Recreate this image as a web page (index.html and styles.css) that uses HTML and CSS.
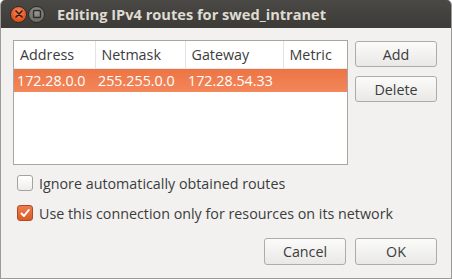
FILE: index.html
```html
<!DOCTYPE html>
<html lang="en">
<head>
    <meta charset="UTF-8">
    <title>Editing IPv4 routes for swed_intranet</title>
    <link rel="stylesheet" href="styles.css">
</head>
<body>

<div class="window">
    <div class="titlebar">
        <span class="wbtn close">
            <svg width="10" height="10" viewBox="0 0 10 10"><path d="M2 2 L8 8 M8 2 L2 8" stroke="#3a1a0e" stroke-width="1.6" stroke-linecap="round"/></svg>
        </span>
        <span class="wbtn max">
            <svg width="10" height="10" viewBox="0 0 10 10"><rect x="1.5" y="1.5" width="7" height="7" rx="1" fill="none" stroke="#2e2d2a" stroke-width="1.4"/></svg>
        </span>
        <span class="title">Editing IPv4 routes for swed_intranet</span>
    </div>

    <div class="content">
        <div class="top-row">
            <div class="routes">
                <table>
                    <tr class="head">
                        <th class="c-addr">Address</th>
                        <th class="c-mask">Netmask</th>
                        <th class="c-gw">Gateway</th>
                        <th class="c-metric">Metric</th>
                    </tr>
                    <tr class="selected">
                        <td>172.28.0.0</td>
                        <td>255.255.0.0</td>
                        <td>172.28.54.33</td>
                        <td></td>
                    </tr>
                </table>
            </div>
            <div class="side-buttons">
                <button>Add</button>
                <button>Delete</button>
            </div>
        </div>

        <div class="checks">
            <label class="check"><span class="box"></span>Ignore automatically obtained routes</label>
            <label class="check"><span class="box on">
                <svg width="12" height="12" viewBox="0 0 12 12"><path d="M2.5 6.5 L5 9 L9.8 3" fill="none" stroke="#fff" stroke-width="2" stroke-linecap="round" stroke-linejoin="round"/></svg>
            </span>Use this connection only for resources on its network</label>
        </div>

        <div class="bottom-buttons">
            <button>Cancel</button>
            <button>OK</button>
        </div>
    </div>
</div>

</body>
</html>
```

FILE: styles.css
```css
html, body {
    margin: 0;
    padding: 0;
}
body {
    font-family: "Open Sans", "DejaVu Sans", sans-serif;
    font-size: 14.3px;
    color: #3c3c3c;
}
.window {
    width: 452px;
    height: 279px;
    box-sizing: border-box;
    display: flex;
    flex-direction: column;
    background: #f2f1f0;
    border: 1px solid #9b9a97;
    border-top: none;
    border-radius: 5px 5px 0 0;
    overflow: hidden;
}
.titlebar {
    height: 28px;
    flex: none;
    display: flex;
    align-items: center;
    padding-left: 10px;
    background: linear-gradient(#4a4945, #3c3b37);
    margin: 0 -1px;
}
.wbtn {
    width: 17px;
    height: 17px;
    border-radius: 50%;
    display: flex;
    align-items: center;
    justify-content: center;
    margin-right: 1px;
    box-sizing: border-box;
}
.wbtn.close {
    background: radial-gradient(circle at 50% 35%, #f58a5c, #e0501e 70%);
    border: 1px solid #2c2b28;
}
.wbtn.max {
    background: radial-gradient(circle at 50% 35%, #9a9892, #6f6d67 70%);
    border: 1px solid #2c2b28;
}
.title {
    margin-left: 11px;
    font-weight: bold;
    font-size: 14.6px;
    color: #dfdbd2;
}
.content {
    flex: 1;
    display: flex;
    flex-direction: column;
    padding: 12px 14px 13px 12px;
}
.top-row {
    display: flex;
    gap: 7px;
}
.routes {
    width: 335px;
    height: 125px;
    box-sizing: border-box;
    background: white;
    border: 1px solid #a8a6a2;
}
table {
    border-collapse: collapse;
    width: 100%;
}
th {
    height: 27px;
    padding: 0 0 0 6px;
    text-align: left;
    font-weight: normal;
    color: #3c3c3c;
    border-left: 1px solid #e4e3e1;
    border-bottom: 1px solid #ebeae8;
    box-sizing: border-box;
}
th.c-addr { width: 81px; border-left: none; }
th.c-mask { width: 90px; }
th.c-gw { width: 98px; }
td {
    height: 23px;
    padding: 0 0 0 3px;
    white-space: nowrap;
}
.selected {
    background: linear-gradient(#ec7342, #f3875b);
    color: white;
}
.side-buttons {
    display: flex;
    flex-direction: column;
    gap: 9px;
    padding-top: 1px;
}
button {
    width: 82px;
    height: 26px;
    font-family: inherit;
    font-size: 14.3px;
    color: #3c3c3c;
    background: linear-gradient(#fbfbfa, #e9e8e6);
    border: 1px solid #aeaca8;
    border-radius: 3px;
    padding: 0;
}
.checks {
    margin-top: 10px;
    display: flex;
    flex-direction: column;
    gap: 14px;
    padding-left: 4px;
}
.check {
    display: flex;
    align-items: center;
    height: 16px;
}
.box {
    width: 16px;
    height: 16px;
    box-sizing: border-box;
    border: 1px solid #a5a3a0;
    border-radius: 3px;
    background: linear-gradient(#ffffff, #eeedeb);
    margin-right: 6px;
    display: flex;
    align-items: center;
    justify-content: center;
}
.box.on {
    background: linear-gradient(#ef7c4d, #d95b28);
    border-color: #b24a1f;
}
.bottom-buttons {
    margin-top: auto;
    display: flex;
    justify-content: flex-end;
    gap: 9px;
}
.bottom-buttons button {
    height: 27px;
}
```
